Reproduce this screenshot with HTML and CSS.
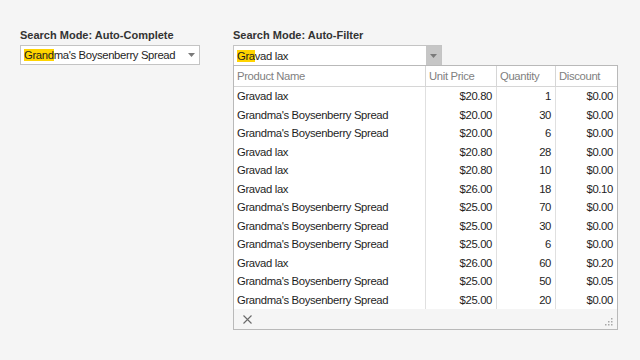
FILE: index.html
```html
<!DOCTYPE html>
<html>
<head>
<meta charset="utf-8">
<link rel="stylesheet" href="styles.css">
</head>
<body>
<div class="page">
  <div class="panel left">
    <div class="label">Search Mode: Auto-Complete</div>
    <div class="combo">
      <span class="text"><span class="hl">Grand</span>ma's Boysenberry Spread</span>
      <span class="arrow"><svg width="7" height="4" viewBox="0 0 7 4"><path d="M0 0H7L3.5 4Z" fill="#7a7a7a"/></svg></span>
    </div>
  </div>
  <div class="panel right">
    <div class="label">Search Mode: Auto-Filter</div>
    <div class="combo filter">
      <span class="text"><span class="hl">Gra</span>vad lax</span>
      <span class="btn"><svg width="7" height="4" viewBox="0 0 7 4"><path d="M0 0H7L3.5 4Z" fill="#7a7a7a"/></svg></span>
    </div>
    <div class="popup">
      <div class="grid">
        <div class="hd">Product Name</div><div class="hd">Unit Price</div><div class="hd">Quantity</div><div class="hd last">Discount</div>
        <div class="c">Gravad lax</div><div class="c r">$20.80</div><div class="c r">1</div><div class="c r last">$0.00</div>
        <div class="c">Grandma's Boysenberry Spread</div><div class="c r">$20.00</div><div class="c r">30</div><div class="c r last">$0.00</div>
        <div class="c">Grandma's Boysenberry Spread</div><div class="c r">$20.00</div><div class="c r">6</div><div class="c r last">$0.00</div>
        <div class="c">Gravad lax</div><div class="c r">$20.80</div><div class="c r">28</div><div class="c r last">$0.00</div>
        <div class="c">Gravad lax</div><div class="c r">$20.80</div><div class="c r">10</div><div class="c r last">$0.00</div>
        <div class="c">Gravad lax</div><div class="c r">$26.00</div><div class="c r">18</div><div class="c r last">$0.10</div>
        <div class="c">Grandma's Boysenberry Spread</div><div class="c r">$25.00</div><div class="c r">70</div><div class="c r last">$0.00</div>
        <div class="c">Grandma's Boysenberry Spread</div><div class="c r">$25.00</div><div class="c r">30</div><div class="c r last">$0.00</div>
        <div class="c">Grandma's Boysenberry Spread</div><div class="c r">$25.00</div><div class="c r">6</div><div class="c r last">$0.00</div>
        <div class="c">Gravad lax</div><div class="c r">$26.00</div><div class="c r">60</div><div class="c r last">$0.20</div>
        <div class="c">Grandma's Boysenberry Spread</div><div class="c r">$25.00</div><div class="c r">50</div><div class="c r last">$0.05</div>
        <div class="c">Grandma's Boysenberry Spread</div><div class="c r">$25.00</div><div class="c r">20</div><div class="c r last">$0.00</div>
      </div>
      <div class="footer">
        <svg class="close" width="9" height="9" viewBox="0 0 9 9"><path d="M0.5 0.5L8.5 8.5M8.5 0.5L0.5 8.5" stroke="#6a6a6a" stroke-width="1.1"/></svg>
        <svg class="grip" width="10" height="10" viewBox="0 0 10 10" fill="#a8a8a8">
          <rect x="8" y="2" width="1.5" height="1.5"/>
          <rect x="5" y="5" width="1.5" height="1.5"/><rect x="8" y="5" width="1.5" height="1.5"/>
          <rect x="2" y="8" width="1.5" height="1.5"/><rect x="5" y="8" width="1.5" height="1.5"/><rect x="8" y="8" width="1.5" height="1.5"/>
        </svg>
      </div>
    </div>
  </div>
</div>
</body>
</html>
```

FILE: styles.css
```css
html, body {
  margin: 0;
  padding: 0;
}
body {
  background: #f5f5f5;
  font-family: "Liberation Sans", Arial, sans-serif;
  font-size: 11.3px;
  letter-spacing: -0.35px;
  color: #1e1e1e;
  width: 640px;
  height: 360px;
  overflow: hidden;
}
.page {
  display: flex;
  align-items: flex-start;
  padding: 28px 0 0 20px;
  gap: 33px;
}
.label {
  font-weight: bold;
  font-size: 11px;
  letter-spacing: 0;
  height: 17px;
  line-height: 14px;
  color: #333;
  white-space: nowrap;
}
.panel.left { width: 180px; }
.panel.right { width: 385px; }
.combo {
  box-sizing: border-box;
  height: 20px;
  border: 1px solid #c4c4c4;
  background: #fff;
  display: flex;
  align-items: center;
  padding-left: 3px;
}
.combo .text { flex: 1; white-space: nowrap; }
.hl { background: #ffd400; }
.combo .arrow {
  width: 15px;
  display: flex;
  justify-content: center;
  align-items: center;
}
.combo.filter {
  width: 209px;
  padding-right: 0;
  border-bottom: none;
}
.combo.filter .btn {
  width: 15px;
  height: 100%;
  background: #c6c6c6;
  display: flex;
  align-items: center;
  justify-content: center;
}
.popup {
  box-sizing: border-box;
  width: 385px;
  border: 1px solid #b9b9b9;
  background: #fff;
}
.grid {
  display: grid;
  grid-template-columns: 192px 71px 59px 1fr;
  grid-auto-rows: 18.5px;
  grid-template-rows: 21px;
}
.hd {
  color: #7f7f7f;
  border-right: 1px solid #d6d6d6;
  border-bottom: 1px solid #d6d6d6;
  padding-left: 3px;
  display: flex;
  align-items: center;
  white-space: nowrap;
}
.c {
  border-right: 1px solid #e0e0e0;
  padding: 0 4px 0 3px;
  display: flex;
  align-items: center;
  white-space: nowrap;
}
.c.r { justify-content: flex-end; }
.last { border-right: none; }
.footer {
  height: 20px;
  background: #f5f5f5;
  display: flex;
  align-items: center;
  justify-content: space-between;
  padding: 0 4px 0 9px;
}
.grip { margin-top: 4px; }
```
